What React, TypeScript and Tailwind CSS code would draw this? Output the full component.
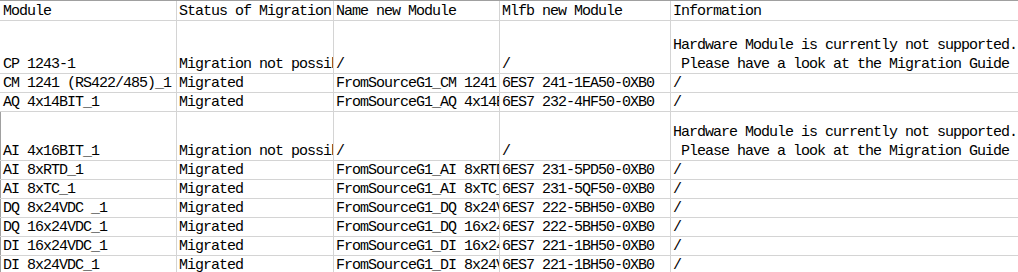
import React from "react";

type Row = { cells: string[]; tall?: number; leftBorder?: boolean };

const rows: Row[] = [
  { cells: ["CP 1243-1", "Migration not possible", "/", "/", "Hardware Module is currently not supported.\n Please have a look at the Migration Guide"], tall: 1 },
  { cells: ["CM 1241 (RS422/485)_1", "Migrated", "FromSourceG1_CM 1241", "6ES7 241-1EA50-0XB0", "/"] },
  { cells: ["AQ 4x14BIT_1", "Migrated", "FromSourceG1_AQ 4x14BIT_1", "6ES7 232-4HF50-0XB0", "/"] },
  { cells: ["AI 4x16BIT_1", "Migration not possible", "/", "/", "Hardware Module is currently not supported.\n Please have a look at the Migration Guide"], tall: 2, leftBorder: true },
  { cells: ["AI 8xRTD_1", "Migrated", "FromSourceG1_AI 8xRTD_1", "6ES7 231-5PD50-0XB0", "/"], leftBorder: true },
  { cells: ["AI 8xTC_1", "Migrated", "FromSourceG1_AI 8xTC_1", "6ES7 231-5QF50-0XB0", "/"], leftBorder: true },
  { cells: ["DQ 8x24VDC _1", "Migrated", "FromSourceG1_DQ 8x24VDC _1", "6ES7 222-5BH50-0XB0", "/"], leftBorder: true },
  { cells: ["DQ 16x24VDC_1", "Migrated", "FromSourceG1_DQ 16x24VDC_1", "6ES7 222-5BH50-0XB0", "/"], leftBorder: true },
  { cells: ["DI 16x24VDC_1", "Migrated", "FromSourceG1_DI 16x24VDC_1", "6ES7 221-1BH50-0XB0", "/"], leftBorder: true },
  { cells: ["DI 8x24VDC_1", "Migrated", "FromSourceG1_DI 8x24VDC_1", "6ES7 221-1BH50-0XB0", "/"], leftBorder: true },
];

const colClasses = [
  "w-[177px] border-r border-[#d4d4d4] pl-[3px]",
  "w-[157px] border-r border-[#d4d4d4] pl-[2px]",
  "w-[166px] border-r border-[#d4d4d4] pl-[2px]",
  "w-[171px] border-r border-[#d4d4d4] pl-[2px]",
  "flex-1 pl-[2px]",
];

function Cell({ text, idx }: { text: string; idx: number }) {
  return (
    <div className={`${colClasses[idx]} shrink-0 overflow-hidden flex flex-col justify-end`}>
      {text.split("\n").map((line, i) => (
        <div key={i} className="whitespace-pre leading-[16px] h-[19px] pt-[3px]">
          {line}
        </div>
      ))}
    </div>
  );
}

export default function App() {
  const header = ["Module", "Status of Migration", "Name new Module", "Mlfb new Module", "Information"];
  return (
    <div
      className="w-[1018px] h-[272px] overflow-hidden bg-white text-black text-[15px] tracking-[-1px]"
      style={{ fontFamily: '"Liberation Mono", monospace' }}
    >
      <div className="flex border-t border-[#a0a0a0] border-b border-b-[#d4d4d4] h-[21px]">
        {header.map((h, i) => (
          <Cell key={i} text={h} idx={i} />
        ))}
      </div>
      {rows.map((r, ri) => (
        <div
          key={ri}
          className={`flex border-b border-[#d4d4d4] ${
            r.tall === 1 ? "h-[53px]" : r.tall === 2 ? "h-[49px]" : "h-[19px]"
          } ${r.leftBorder ? "shadow-[inset_1px_0_0_#a0a0a0]" : ""}`}
        >
          {r.cells.map((c, ci) => (
            <Cell key={ci} text={c} idx={ci} />
          ))}
        </div>
      ))}
    </div>
  );
}
